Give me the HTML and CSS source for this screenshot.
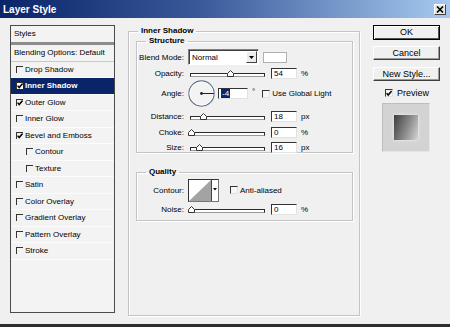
FILE: index.html
```html
<!DOCTYPE html>
<html lang="en">
  <head>
    <meta charset="UTF-8" />
    <title>Layer Style</title>
    <link rel="stylesheet" href="styles.css">
  </head>
  <body>
    <div class="dialog">
      <div class="titlebar">
        <span class="title">Layer Style</span>
        <span class="close">
          <svg width="8" height="7" viewBox="0 0 8 7"><path d="M1 0.5 L7 6.5 M7 0.5 L1 6.5" stroke="#000" stroke-width="1.6" fill="none"/></svg>
        </span>
      </div>

      <div class="content">
        <div class="styles-list">
          <div class="list-head">Styles</div>
          <div class="list-item blending">Blending Options: Default</div>
          <div class="list-item"><span class="check"></span>Drop Shadow</div>
          <div class="list-item selected"><span class="check"><svg width="6" height="6" viewBox="0 0 6 6"><path d="M0.6 2.6 L2.2 4.6 L5.6 0.6" stroke="#000" stroke-width="1.5" fill="none"/></svg></span>Inner Shadow</div>
          <div class="list-item"><span class="check"><svg width="6" height="6" viewBox="0 0 6 6"><path d="M0.6 2.6 L2.2 4.6 L5.6 0.6" stroke="#000" stroke-width="1.5" fill="none"/></svg></span>Outer Glow</div>
          <div class="list-item"><span class="check"></span>Inner Glow</div>
          <div class="list-item"><span class="check"><svg width="6" height="6" viewBox="0 0 6 6"><path d="M0.6 2.6 L2.2 4.6 L5.6 0.6" stroke="#000" stroke-width="1.5" fill="none"/></svg></span>Bevel and Emboss</div>
          <div class="list-item sub"><span class="check"></span>Contour</div>
          <div class="list-item sub"><span class="check"></span>Texture</div>
          <div class="list-item"><span class="check"></span>Satin</div>
          <div class="list-item"><span class="check"></span>Color Overlay</div>
          <div class="list-item"><span class="check"></span>Gradient Overlay</div>
          <div class="list-item"><span class="check"></span>Pattern Overlay</div>
          <div class="list-item"><span class="check"></span>Stroke</div>
        </div>

        <fieldset class="panel">
          <legend>Inner Shadow</legend>

          <fieldset class="group structure">
            <legend>Structure</legend>
            <div class="row blend">
              <span class="label">Blend Mode:</span>
              <div class="select">
                <span class="select-text">Normal</span>
                <span class="arrow"><svg width="5" height="3" viewBox="0 0 5 3"><polygon points="0,0 5,0 2.5,3" fill="#000"/></svg></span>
              </div>
              <span class="swatch"></span>
            </div>
            <div class="row">
              <span class="label">Opacity:</span>
              <div class="slider"><div class="rail"><svg class="thumb" style="left: 54%" width="7" height="7" viewBox="0 0 7 7"><polygon points="0.5,6.5 0.5,3.5 3.5,0.5 6.5,3.5 6.5,6.5" fill="#fff" stroke="#333"/></svg></div></div>
              <span class="input">54</span>
              <span class="unit">%</span>
            </div>
            <div class="row angle">
              <span class="label">Angle:</span>
              <svg class="dial" width="27" height="27" viewBox="0 0 27 27">
                <circle cx="13.5" cy="13.5" r="12.6" fill="#f3f3f3" stroke="#5d6b8a" stroke-width="1.1"/>
                <circle cx="13.5" cy="13.5" r="11.6" fill="none" stroke="#fff" stroke-width="0.8"/>
                <path d="M13.5 13.5 H26" stroke="#222" stroke-width="1"/>
                <circle cx="13.5" cy="13.5" r="1.4" fill="#222"/>
              </svg>
              <span class="input wide"><span class="sel">-4</span></span>
              <span class="deg">°</span>
              <span class="check box"></span>
              <span class="check-label">Use Global Light</span>
            </div>
            <div class="row gap">
              <span class="label">Distance:</span>
              <div class="slider"><div class="rail"><svg class="thumb" style="left: 17%" width="7" height="7" viewBox="0 0 7 7"><polygon points="0.5,6.5 0.5,3.5 3.5,0.5 6.5,3.5 6.5,6.5" fill="#fff" stroke="#333"/></svg></div></div>
              <span class="input">18</span>
              <span class="unit">px</span>
            </div>
            <div class="row">
              <span class="label">Choke:</span>
              <div class="slider"><div class="rail"><svg class="thumb" style="left: 1%" width="7" height="7" viewBox="0 0 7 7"><polygon points="0.5,6.5 0.5,3.5 3.5,0.5 6.5,3.5 6.5,6.5" fill="#fff" stroke="#333"/></svg></div></div>
              <span class="input">0</span>
              <span class="unit">%</span>
            </div>
            <div class="row">
              <span class="label">Size:</span>
              <div class="slider"><div class="rail"><svg class="thumb" style="left: 12%" width="7" height="7" viewBox="0 0 7 7"><polygon points="0.5,6.5 0.5,3.5 3.5,0.5 6.5,3.5 6.5,6.5" fill="#fff" stroke="#333"/></svg></div></div>
              <span class="input">16</span>
              <span class="unit">px</span>
            </div>
          </fieldset>

          <fieldset class="group quality">
            <legend>Quality</legend>
            <div class="row contour-row">
              <span class="label">Contour:</span>
              <span class="contour">
                <svg width="29" height="21" viewBox="0 0 29 21">
                  <rect x="0" y="0" width="29" height="21" fill="#fff"/>
                  <polygon points="0,21 22,0 22,21" fill="#a3a3a3"/>
                  <path d="M22.5 0 V21" stroke="#444" stroke-width="1"/>
                  <polygon points="24,8 28,8 26,10.5" fill="#000"/>
                </svg>
              </span>
              <span class="check box anti"></span>
              <span class="check-label">Anti-aliased</span>
            </div>
            <div class="row noise">
              <span class="label">Noise:</span>
              <div class="slider"><div class="rail"><svg class="thumb" style="left: 1%" width="7" height="7" viewBox="0 0 7 7"><polygon points="0.5,6.5 0.5,3.5 3.5,0.5 6.5,3.5 6.5,6.5" fill="#fff" stroke="#333"/></svg></div></div>
              <span class="input">0</span>
              <span class="unit">%</span>
            </div>
          </fieldset>
        </fieldset>

        <div class="side">
          <div class="btn default">OK</div>
          <div class="btn">Cancel</div>
          <div class="btn">New Style...</div>
          <div class="preview-row">
            <span class="check box"><svg width="7" height="7" viewBox="0 0 6 6"><path d="M0.6 2.6 L2.2 4.6 L5.6 0.6" stroke="#000" stroke-width="1.5" fill="none"/></svg></span>
            <span>Preview</span>
          </div>
          <div class="preview">
            <div class="swatch-preview"></div>
          </div>
        </div>
      </div>
    </div>
  </body>
</html>
```

FILE: styles.css
```css
* {
  margin: 0;
  padding: 0;
  box-sizing: border-box;
}
body {
  background-color: #2e2e2e;
  font-family: "Liberation Sans", Arial, sans-serif;
  font-size: 8px;
  color: #000;
}
.dialog {
  width: 450px;
  height: 324px;
  background-color: #f0f0f0;
}
.titlebar {
  height: 18px;
  padding: 0 4px 0 3px;
  display: flex;
  align-items: center;
  justify-content: space-between;
  background: linear-gradient(to right, #0a246a, #3a5a9a 45%, #a6caf0);
}
.title {
  color: white;
  font-size: 10px;
  font-weight: bold;
}
.close {
  width: 12px;
  height: 11px;
  display: flex;
  align-items: center;
  justify-content: center;
  background-color: #e6e6e6;
  border: 1px solid;
  border-color: #fff #404040 #404040 #fff;
}
.content {
  display: flex;
  padding-top: 7px;
}

/* styles list */
.styles-list {
  margin-left: 10px;
  width: 105px;
  height: 288px;
  border: 1px solid #4a4a4a;
  background-color: #f3f3f3;
}
.list-head {
  height: 19px;
  padding-left: 3px;
  line-height: 15px;
  border-bottom: 3px solid #8c8c8c;
}
.list-item {
  height: 16.5px;
  padding-left: 5px;
  display: flex;
  align-items: center;
  border-bottom: 1px solid #fcfcfc;
  white-space: nowrap;
}
.list-item.blending {
  padding-left: 3px;
  border-bottom-color: #c9c9c9;
}
.list-item.sub {
  padding-left: 15px;
}
.list-item.selected {
  background-color: #0a246a;
  color: white;
  font-weight: bold;
}
.check {
  width: 7px;
  height: 7px;
  margin-right: 2px;
  flex: none;
  display: flex;
  border-top: 1px solid #333;
  border-left: 1px solid #333;
}
.selected .check {
  background-color: white;
}
.check.box {
  width: 8px;
  height: 8px;
  background-color: #f7f7f7;
  border-right: 1px solid #e2e2e2;
  border-bottom: 1px solid #e2e2e2;
}

/* group boxes */
fieldset {
  border: 1px solid #c4c4c4;
  box-shadow: inset 1px 1px 0 #fff, 1px 1px 0 #fff;
  padding: 0;
  min-width: 0;
}
legend {
  margin-left: 9px;
  padding: 0 3px;
  font-weight: bold;
  line-height: 10px;
}
.panel {
  margin-left: 13px;
  margin-top: 1px;
  width: 232px;
  height: 290px;
}
.group {
  margin-left: 7px;
  width: 217px;
}
.structure {
  height: 117px;
}
.quality {
  margin-top: 14px;
  height: 54px;
}
.row {
  height: 16px;
  display: flex;
  align-items: center;
  white-space: nowrap;
}
.row.blend {
  margin-top: 3px;
}
.row.angle {
  height: 25px;
}
.row.gap {
  margin-top: 3px;
  height: 15.5px;
}
.row.gap ~ .row {
  height: 15.5px;
}
.label {
  width: 47px;
  margin-right: 4px;
  text-align: right;
  flex: none;
}
.select {
  width: 71px;
  height: 16px;
  display: flex;
  background-color: white;
  border: 1px solid;
  border-color: #808080 #fff #fff #808080;
  box-shadow: inset 1px 1px 0 #404040;
}
.select-text {
  flex: 1;
  padding: 1px 0 0 3px;
  line-height: 13px;
}
.arrow {
  width: 11px;
  margin: 1px 1px 1px 0;
  display: flex;
  align-items: center;
  justify-content: center;
  background-color: #ececec;
  border: 1px solid;
  border-color: #fff #404040 #404040 #fff;
}
.swatch {
  width: 24px;
  height: 11px;
  margin-left: 4px;
  background-color: white;
  border: 1px solid #b0b0b0;
}
.slider {
  width: 79px;
  height: 7px;
  flex: none;
  position: relative;
}
.rail {
  position: absolute;
  left: 2px;
  right: 2px;
  top: 3px;
  height: 4px;
  background-color: white;
  border: 1px solid #2a2a2a;
  border-bottom-color: #9a9a9a;
}
.thumb {
  position: absolute;
  top: -4px;
  margin-left: -3.5px;
}
.input {
  width: 26px;
  height: 11px;
  margin-left: 4px;
  padding-left: 2px;
  line-height: 10px;
  background-color: white;
  border-top: 1px solid #333;
  border-left: 1px solid #333;
  border-right: 1px solid #e2e2e2;
  border-bottom: 1px solid #e2e2e2;
}
.input.wide {
  width: 30px;
  margin-left: 3px;
}
.sel {
  background-color: #0a246a;
  color: white;
  padding: 0 1px;
}
.unit {
  margin-left: 4px;
}
.dial {
  flex: none;
}
.deg {
  margin: 0 0 5px 4px;
}
.row .check.box {
  margin-left: 7px;
}
.check-label {
  margin-left: 0;
}
.contour-row {
  margin-top: 1px;
  height: 24px;
}
.contour {
  width: 31px;
  height: 23px;
  display: flex;
  border: 1px solid #444;
  border-color: #333 #777 #777 #333;
}
.row .check.anti {
  margin-left: 11px;
}
.noise {
  height: 14px;
}

/* right column */
.side {
  margin-left: 13px;
  width: 67px;
  display: flex;
  flex-direction: column;
  font-size: 9px;
}
.btn {
  height: 14px;
  margin-bottom: 7px;
  text-align: center;
  line-height: 12px;
  background-color: #f0f0f0;
  border: 1px solid;
  border-color: #fff #404040 #404040 #fff;
  box-shadow: inset -1px -1px 0 #9a9a9a;
}
.btn.default {
  height: 15px;
  margin-bottom: 6px;
  border-color: #000;
  box-shadow: inset 1px 1px 0 #fff, inset -1px -1px 0 #505050;
}
.preview-row {
  margin-top: -2px;
  height: 13px;
  padding-left: 12px;
  display: flex;
  align-items: center;
}
.preview-row .check {
  margin-right: 4px;
}
.preview {
  margin: 4px 0 0 9px;
  width: 48px;
  height: 49px;
  padding: 11px;
  background-color: #d3d3d3;
  border: 1px solid;
  border-color: #bdbdbd #e6e6e6 #e6e6e6 #bdbdbd;
}
.swatch-preview {
  width: 24px;
  height: 25px;
  background: linear-gradient(110deg, #3e3e3e, #8c8c8c 55%, #d6d6d6);
  box-shadow: 0 0 3px #f2f2f2;
}
```
